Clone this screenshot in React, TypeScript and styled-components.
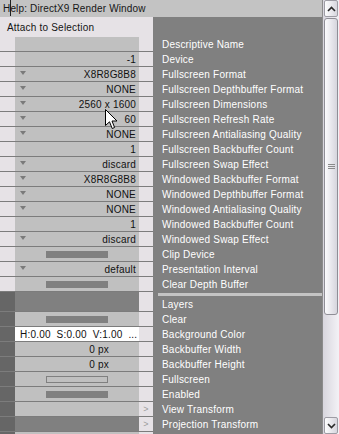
import React from "react";
import styled, { createGlobalStyle } from "styled-components";

const GlobalStyle = createGlobalStyle`
  html, body { margin: 0; padding: 0; background: #e6e2e6; }
  body { font-family: "Liberation Sans", Arial, sans-serif; font-size: 10px; }
  * { box-sizing: border-box; }
`;

type Value =
  | { kind: "empty" }
  | { kind: "text"; text: string; dropdown?: boolean }
  | { kind: "bar"; hollow?: boolean }
  | { kind: "color"; text: string }
  | { kind: "px"; text: string }
  | { kind: "arrow" };

type Tone = "grey" | "dark" | "white";

interface RowData {
  value: Value;
  tone: Tone;
  tall?: boolean;
}

const section1Labels = [
  "Descriptive Name",
  "Device",
  "Fullscreen Format",
  "Fullscreen Depthbuffer Format",
  "Fullscreen Dimensions",
  "Fullscreen Refresh Rate",
  "Fullscreen Antialiasing Quality",
  "Fullscreen Backbuffer Count",
  "Fullscreen Swap Effect",
  "Windowed Backbuffer Format",
  "Windowed Depthbuffer Format",
  "Windowed Antialiasing Quality",
  "Windowed Backbuffer Count",
  "Windowed Swap Effect",
  "Clip Device",
  "Presentation Interval",
  "Clear Depth Buffer",
];

const section2Labels = [
  "Layers",
  "Clear",
  "Background Color",
  "Backbuffer Width",
  "Backbuffer Height",
  "Fullscreen",
  "Enabled",
  "View Transform",
  "Projection Transform",
];

const section1Rows: RowData[] = [
  { value: { kind: "empty" }, tone: "grey" },
  { value: { kind: "text", text: "-1" }, tone: "grey" },
  { value: { kind: "text", text: "X8R8G8B8", dropdown: true }, tone: "grey" },
  { value: { kind: "text", text: "NONE", dropdown: true }, tone: "grey" },
  { value: { kind: "text", text: "2560 x 1600", dropdown: true }, tone: "grey" },
  { value: { kind: "text", text: "60", dropdown: true }, tone: "grey" },
  { value: { kind: "text", text: "NONE", dropdown: true }, tone: "grey" },
  { value: { kind: "text", text: "1" }, tone: "grey" },
  { value: { kind: "text", text: "discard", dropdown: true }, tone: "grey" },
  { value: { kind: "text", text: "X8R8G8B8", dropdown: true }, tone: "grey" },
  { value: { kind: "text", text: "NONE", dropdown: true }, tone: "grey" },
  { value: { kind: "text", text: "NONE", dropdown: true }, tone: "grey" },
  { value: { kind: "text", text: "1" }, tone: "grey" },
  { value: { kind: "text", text: "discard", dropdown: true }, tone: "grey" },
  { value: { kind: "bar" }, tone: "grey" },
  { value: { kind: "text", text: "default", dropdown: true }, tone: "grey" },
  { value: { kind: "bar" }, tone: "grey" },
];

const section2Rows: RowData[] = [
  { value: { kind: "empty" }, tone: "dark", tall: true },
  { value: { kind: "bar" }, tone: "grey" },
  { value: { kind: "color", text: "H:0.00  S:0.00  V:1.00  ..." }, tone: "white" },
  { value: { kind: "px", text: "0 px" }, tone: "grey" },
  { value: { kind: "px", text: "0 px" }, tone: "grey" },
  { value: { kind: "bar", hollow: true }, tone: "grey" },
  { value: { kind: "bar" }, tone: "grey" },
  { value: { kind: "arrow" }, tone: "grey" },
  { value: { kind: "arrow" }, tone: "dark" },
  { value: { kind: "empty" }, tone: "grey" },
];

const Window = styled.div`
  position: relative;
  display: flex;
  width: 339px;
  height: 434px;
  overflow: hidden;
  background: #e6e2e6;
`;

const Main = styled.div`
  flex: 1;
  min-width: 0;
  display: flex;
  flex-direction: column;
`;

const TitleBar = styled.div`
  height: 17px;
  flex: none;
  display: flex;
  align-items: center;
  padding-left: 3px;
  background: #c3c3c3;
  color: #161616;
  font-size: 10px;
  letter-spacing: 0.15px;
  white-space: pre;
`;

const Caret = styled.span`
  display: inline-block;
  width: 1px;
  height: 16px;
  margin-right: -1px;
  background: #202020;
  align-self: flex-start;
`;

const Body = styled.div`
  flex: 1;
  display: flex;
  min-height: 0;
`;

const LeftPanel = styled.div`
  width: 153px;
  flex: none;
  display: flex;
  flex-direction: column;
  background: #e6e2e6;
`;

const AttachHeader = styled.div`
  height: 20px;
  flex: none;
  display: flex;
  align-items: center;
  padding-left: 7px;
  color: #141414;
  letter-spacing: 0.2px;
`;

const Row = styled.div<{ $tall?: boolean }>`
  display: grid;
  grid-template-columns: 15px 124px 14px;
  height: ${(p) => (p.$tall ? 20 : 15)}px;
  flex: none;
  border-bottom: 1px solid #7c7c7c;
`;

const Strip = styled.div<{ $dark?: boolean }>`
  background: ${(p) => (p.$dark ? "#666666" : "#e6e2e6")};
`;

const toneColors: Record<Tone, string> = {
  grey: "#c0c0c0",
  dark: "#808080",
  white: "#ffffff",
};

const ValueCell = styled.div<{ $tone: Tone; $align: "end" | "center" | "start"; $padRight?: number }>`
  display: flex;
  align-items: center;
  justify-content: ${(p) => (p.$align === "end" ? "flex-end" : p.$align === "center" ? "center" : "flex-start")};
  padding-right: ${(p) => p.$padRight ?? 3}px;
  padding-left: ${(p) => (p.$align === "start" ? 5 : 0)}px;
  background: ${(p) => toneColors[p.$tone]};
  color: #111111;
  letter-spacing: 0.2px;
  white-space: pre;
  padding-top: 1px;
`;

const Triangle = styled.span`
  width: 0;
  height: 0;
  border-left: 3px solid transparent;
  border-right: 3px solid transparent;
  border-top: 4px solid #7a7a7a;
  margin-left: 5px;
  margin-right: auto;
  align-self: flex-start;
  margin-top: 3px;
`;

const Bar = styled.span<{ $hollow?: boolean }>`
  width: 62px;
  height: 7px;
  background: ${(p) => (p.$hollow ? "transparent" : "#808080")};
  border: ${(p) => (p.$hollow ? "1px solid #808080" : "none")};
`;

const SideCell = styled.div`
  display: flex;
  align-items: center;
  justify-content: center;
  background: #e6e2e6;
  color: #9c9c9c;
  font-size: 9px;
`;

const RightPanel = styled.div`
  flex: 1;
  min-width: 0;
  display: flex;
  flex-direction: column;
  padding-top: 20px;
  background: #808080;
  color: #ffffff;
`;

const LabelRow = styled.div`
  height: 15px;
  flex: none;
  display: flex;
  align-items: center;
  padding-left: 9px;
  white-space: nowrap;
  letter-spacing: 0.2px;
`;

const SectionBand = styled.div`
  height: 3px;
  flex: none;
  margin: 1px 0 1px 5px;
  background: #c4c4c4;
`;

const Scrollbar = styled.div`
  width: 17px;
  flex: none;
  display: flex;
  flex-direction: column;
  background: linear-gradient(to right, #d8d6de, #f3f2f6);
  border-left: 1px solid #8c8c8c;
`;

const ScrollButton = styled.div`
  height: 17px;
  flex: none;
  display: flex;
  align-items: center;
  justify-content: center;
  margin: 0 1px;
  border: 1px solid #9d9ca4;
  border-radius: 2px;
  background: linear-gradient(to right, #fdfdfe, #d7d6de);
`;

const Thumb = styled.div`
  height: 297px;
  flex: none;
  margin: 1px 1px 0;
  display: flex;
  align-items: center;
  justify-content: center;
  border: 1px solid #8f8e96;
  border-radius: 3px;
  background: linear-gradient(to right, #fbfbfd, #d6d5dd);
`;

const Grip = styled.div`
  width: 7px;
  height: 5px;
  border-top: 1px solid #8a8a8a;
  border-bottom: 1px solid #8a8a8a;
  display: flex;
  align-items: center;
  &::after {
    content: "";
    display: block;
    width: 100%;
    height: 1px;
    background: #8a8a8a;
  }
`;

const Track = styled.div`
  flex: 1;
`;

const Pointer = styled.svg`
  position: absolute;
  left: 105px;
  top: 109px;
  pointer-events: none;
`;

function Chevron({ up }: { up?: boolean }) {
  return (
    <svg width="9" height="6" viewBox="0 0 9 6">
      <path
        d={up ? "M1 5 L4.5 1.5 L8 5" : "M1 1 L4.5 4.5 L8 1"}
        fill="none"
        stroke="#2a2a2a"
        strokeWidth="1.6"
      />
    </svg>
  );
}

function ValueContent({ row }: { row: RowData }) {
  const v = row.value;
  switch (v.kind) {
    case "text":
      return (
        <ValueCell $tone={row.tone} $align="end">
          {v.dropdown && <Triangle />}
          {v.text}
        </ValueCell>
      );
    case "bar":
      return (
        <ValueCell $tone={row.tone} $align="center" $padRight={0}>
          <Bar $hollow={v.hollow} />
        </ValueCell>
      );
    case "color":
      return (
        <ValueCell $tone={row.tone} $align="start">
          {v.text}
        </ValueCell>
      );
    case "px":
      return (
        <ValueCell $tone={row.tone} $align="end" $padRight={30}>
          {v.text}
        </ValueCell>
      );
    default:
      return <ValueCell $tone={row.tone} $align="end" />;
  }
}

function PropRow({ row, darkStrip }: { row: RowData; darkStrip?: boolean }) {
  return (
    <Row $tall={row.tall}>
      <Strip $dark={darkStrip} />
      <ValueContent row={row} />
      <SideCell>{row.value.kind === "arrow" ? ">" : ""}</SideCell>
    </Row>
  );
}

export default function App() {
  return (
    <>
      <GlobalStyle />
      <Window>
        <Main>
          <TitleBar>
            H<Caret />elp: DirectX9 Render Window
          </TitleBar>
          <Body>
            <LeftPanel>
              <AttachHeader>Attach to Selection</AttachHeader>
              {section1Rows.map((r, i) => (
                <PropRow key={`a${i}`} row={r} />
              ))}
              {section2Rows.map((r, i) => (
                <PropRow key={`b${i}`} row={r} darkStrip />
              ))}
            </LeftPanel>
            <RightPanel>
              {section1Labels.map((l) => (
                <LabelRow key={l}>{l}</LabelRow>
              ))}
              <SectionBand />
              {section2Labels.map((l) => (
                <LabelRow key={l}>{l}</LabelRow>
              ))}
            </RightPanel>
          </Body>
        </Main>
        <Scrollbar>
          <ScrollButton>
            <Chevron up />
          </ScrollButton>
          <Thumb>
            <Grip />
          </Thumb>
          <Track />
          <ScrollButton>
            <Chevron />
          </ScrollButton>
        </Scrollbar>
        <Pointer width="13" height="21" viewBox="0 0 13 21">
          <path
            d="M0.5 0.5 L0.5 16.5 L4.5 12.8 L7.2 19.5 L9.6 18.5 L7 12 L12 12 Z"
            fill="#ffffff"
            stroke="#000000"
            strokeWidth="1"
            strokeLinejoin="miter"
          />
        </Pointer>
      </Window>
    </>
  );
}
